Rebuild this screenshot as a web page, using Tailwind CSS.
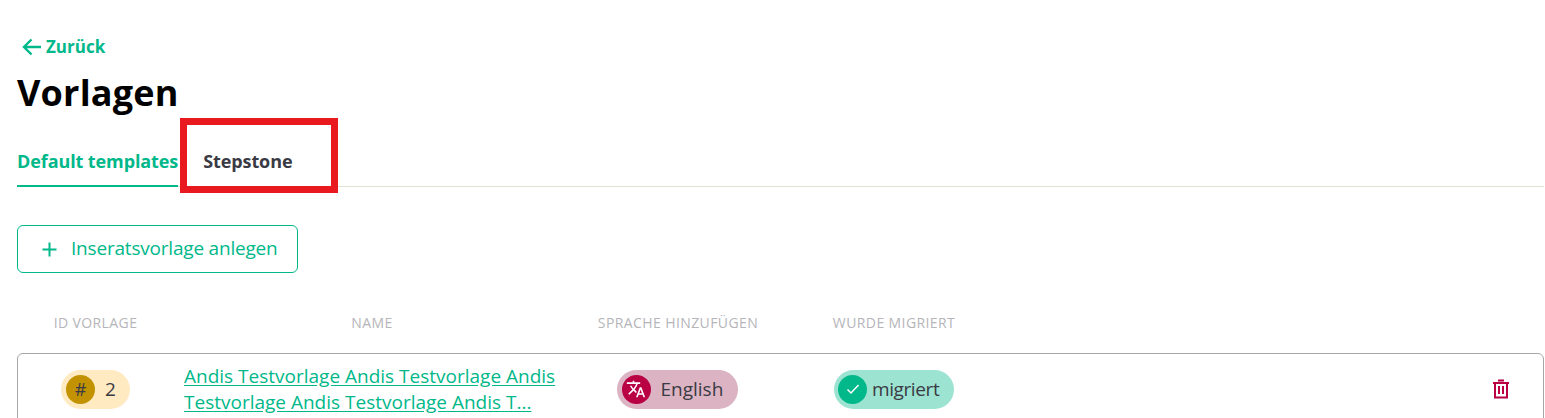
<!DOCTYPE html>
<html lang="de">

<head>
  <meta charset="UTF-8" />
  <meta name="viewport" content="width=device-width, initial-scale=1.0" />
  <title>Vorlagen</title>
  <script src="https://cdn.jsdelivr.net/npm/@tailwindcss/browser@4"></script>
</head>

<body class="bg-white h-[418px] overflow-hidden font-['Open_Sans',sans-serif] text-[#3a3a44]">
  <div class="relative pl-[17px] pr-px pt-[36px]">
    <a href="#" class="flex items-center gap-[4px] h-[22px] pl-[5px] text-[17px] font-bold text-[#00b88a]">
      <svg class="w-[20px] h-[20px]" viewBox="0 0 20 20" fill="none" stroke="currentColor" stroke-width="2.400">
        <path d="M19 10H2M9.500 2.500 2 10l7.500 7.500" />
      </svg>
      Zurück
    </a>

    <h1 class="mt-[10px] h-[50px] text-[36px] leading-[50px] font-bold text-black tracking-[0.2px]">Vorlagen</h1>

    <!-- tabs -->
    <div class="flex h-[50px] mt-[19px] border-b border-[#dfe3d3]">
      <button class="h-[50px] border-b-2 border-[#00b88a] text-[18px] font-bold text-[#00b88a] tracking-[-0.1px]">Default templates</button>
      <button class="h-[50px] ml-[25px] pb-[2px] text-[18px] font-bold text-[#3a3a44] tracking-[-0.1px]">Stepstone</button>
    </div>

    <button class="flex items-center gap-[14px] mt-[38px] w-[281px] h-[48px] pl-[24px] pb-[2px] border border-[#00b88a] rounded-[6px] text-[19px] text-[#00b88a] tracking-[-0.2px]">
      <svg class="w-[15px] h-[15px] mt-[2px]" viewBox="0 0 15 15" fill="none" stroke="currentColor" stroke-width="2">
        <path d="M7.500 0.500v14M0.500 7.500h14" />
      </svg>
      Inseratsvorlage anlegen
    </button>

    <!-- table head -->
    <div class="grid grid-cols-[157px_396px_216px_216px_1fr] mt-[39px] h-[20px] items-center text-center text-[14px] text-[#b5b5ba] tracking-[0.4px]">
      <div>ID VORLAGE</div>
      <div>NAME</div>
      <div>SPRACHE HINZUFÜGEN</div>
      <div>WURDE MIGRIERT</div>
    </div>

    <!-- row -->
    <div class="grid grid-cols-[157px_396px_216px_216px_1fr] items-center mt-[21px] h-[72px] border border-[#a6a6a6] rounded-[6px] text-[19px]">
      <div class="flex justify-center pr-[2px]">
        <span class="flex items-center w-[69px] h-[39px] pl-[5px] gap-[10px] rounded-full bg-[#ffeac2]">
          <span class="flex items-center justify-center w-[29px] h-[29px] rounded-full bg-[#c29200] text-[18px]">#</span>
          2
        </span>
      </div>
      <a href="#" class="px-[9px] text-[19px] leading-[26px] text-[#00b88a] underline underline-offset-2">
        Andis Testvorlage Andis Testvorlage Andis<br />Testvorlage Andis Testvorlage Andis T...
      </a>
      <div class="flex justify-center pr-[4px]">
        <span class="flex items-center w-[121px] h-[39px] pl-[5px] gap-[10px] rounded-full bg-[#dcb3c2]">
          <span class="flex items-center justify-center w-[29px] h-[29px] rounded-full bg-[#b80042]">
            <svg class="w-[20px] h-[20px]" viewBox="0 0 24 24" fill="#fff">
              <path d="M12.870 15.070l-2.540-2.510.030-.030c1.740-1.940 2.980-4.170 3.710-6.530H17V4h-7V2H8v2H1v1.990h11.170C11.500 7.920 10.440 9.750 9 11.350 8.070 10.320 7.300 9.190 6.690 8h-2c.73 1.630 1.730 3.170 2.980 4.560l-5.090 5.020L4 19l5-5 3.110 3.110.760-2.040zM18.500 10h-2L12 22h2l1.120-3h4.750L21 22h2l-4.500-12zm-2.620 7l1.620-4.330L19.120 17h-3.240z" />
            </svg>
          </span>
          English
        </span>
      </div>
      <div class="flex justify-center pr-[2px]">
        <span class="flex items-center w-[120px] h-[39px] pl-[4px] gap-[5px] rounded-full bg-[#9de3d1] tracking-[-0.4px]">
          <span class="flex items-center justify-center w-[29px] h-[29px] rounded-full bg-[#00b88a]">
            <svg class="w-[16px] h-[16px]" viewBox="0 0 16 16" fill="none" stroke="#fff" stroke-width="1.500">
              <path d="M2.500 8.500l3.500 3.500 7.500-8" />
            </svg>
          </span>
          migriert
        </span>
      </div>
      <div class="flex justify-end pr-[33px]">
        <svg class="w-[18px] h-[20px]" viewBox="0 0 18 20" fill="none" stroke="#b80042" stroke-width="2">
          <path d="M1 4h16M6 1.500h6M3 4v14.500h12V4M7 7v8M11 7v8" />
        </svg>
      </div>
    </div>

    <!-- red annotation box -->
    <div class="absolute left-[180px] top-[118px] w-[158px] h-[75px] border-[7px] border-[#e8191f]"></div>
  </div>
</body>

</html>
